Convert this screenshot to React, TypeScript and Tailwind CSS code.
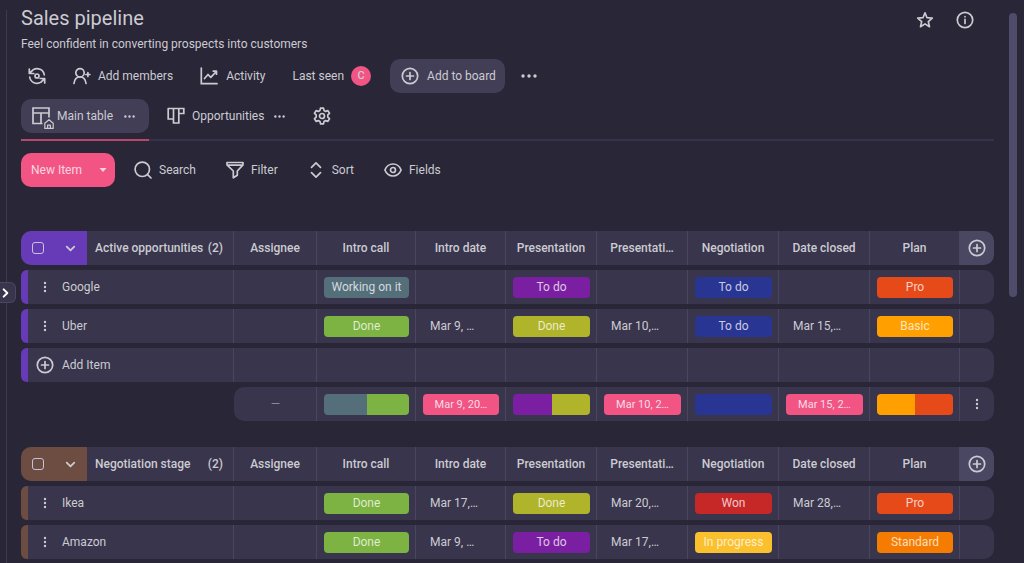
import type { ReactNode } from 'react';

type Cell = { kind: 'text' | 'tag' | 'date' | 'split' | 'dash'; label?: string; colors?: string[] } | null;

type Group = {
    id: string;
    title: string;
    color: string;
    rows: { name: string; cells: Cell[] }[];
    summary: Cell[] | null;
};

const columns = [
    { title: 'Assignee', width: 'w-[83px]' },
    { title: 'Intro call', width: 'w-[99px]' },
    { title: 'Intro date', width: 'w-[90px]' },
    { title: 'Presentation', width: 'w-[91px]' },
    { title: 'Presentati…', width: 'w-[91px]' },
    { title: 'Negotiation', width: 'w-[91px]' },
    { title: 'Date closed', width: 'w-[91px]' },
    { title: 'Plan', width: 'w-[90px]' }
];

const tag = (label: string, color: string): Cell => ({ kind: 'tag', label, colors: [color] });
const text = (label: string): Cell => ({ kind: 'text', label });
const date = (label: string): Cell => ({ kind: 'date', label });
const split = (...colors: string[]): Cell => ({ kind: 'split', colors });

const SLATE = 'bg-[#546e7a]';
const GREEN = 'bg-[#7cb342]';
const LIME = 'bg-[#afb42b]';
const PURPLE = 'bg-[#7b1fa2]';
const INDIGO = 'bg-[#283593]';
const RED = 'bg-[#c62828]';
const YELLOW = 'bg-[#fbc02d]';
const PRO = 'bg-[#e64a19]';
const BASIC = 'bg-[#ffa000]';
const STANDARD = 'bg-[#f57c00]';

const groups: Group[] = [
    {
        id: 'active',
        title: 'Active opportunities',
        color: 'bg-[#673ab7]',
        rows: [
            {
                name: 'Google',
                cells: [null, tag('Working on it', SLATE), null, tag('To do', PURPLE), null, tag('To do', INDIGO), null, tag('Pro', PRO)]
            },
            {
                name: 'Uber',
                cells: [null, tag('Done', GREEN), text('Mar 9, …'), tag('Done', LIME), text('Mar 10,…'), tag('To do', INDIGO), text('Mar 15,…'), tag('Basic', BASIC)]
            }
        ],
        summary: [
            { kind: 'dash' },
            split(SLATE, GREEN),
            date('Mar 9, 20…'),
            split(PURPLE, LIME),
            date('Mar 10, 2…'),
            split(INDIGO),
            date('Mar 15, 2…'),
            split(BASIC, PRO)
        ]
    },
    {
        id: 'negotiation',
        title: 'Negotiation stage',
        color: 'bg-[#6d4c41]',
        rows: [
            {
                name: 'Ikea',
                cells: [null, tag('Done', GREEN), text('Mar 17,…'), tag('Done', LIME), text('Mar 20,…'), tag('Won', RED), text('Mar 28,…'), tag('Pro', PRO)]
            },
            {
                name: 'Amazon',
                cells: [null, tag('Done', GREEN), text('Mar 9, …'), tag('To do', PURPLE), text('Mar 17,…'), tag('In progress', YELLOW), null, tag('Standard', STANDARD)]
            }
        ],
        summary: null
    }
];

const Icon = ({ children, className = 'size-[18px]' }: { children: ReactNode; className?: string }) => (
    <svg
        viewBox="0 0 18 18"
        className={`shrink-0 ${className}`}
        fill="none"
        stroke="currentColor"
        strokeWidth="1.7"
        strokeLinecap="round"
        strokeLinejoin="round"
        aria-hidden="true"
    >
        {children}
    </svg>
);

const PlusCircle = () => (
    <Icon>
        <circle cx="9" cy="9" r="7.7" />
        <path d="M9 5.5v7M5.5 9h7" />
    </Icon>
);

const Dots = ({ className }: { className: string }) => (
    <svg viewBox="0 0 16 4" className={`shrink-0 ${className}`} fill="currentColor" aria-hidden="true">
        <circle cx="2" cy="2" r="1.7" />
        <circle cx="8" cy="2" r="1.7" />
        <circle cx="14" cy="2" r="1.7" />
    </svg>
);

const Kebab = () => (
    <svg viewBox="0 0 4 12" className="h-3 w-1 shrink-0" fill="currentColor" aria-hidden="true">
        <circle cx="2" cy="2" r="1.2" />
        <circle cx="2" cy="6" r="1.2" />
        <circle cx="2" cy="10" r="1.2" />
    </svg>
);

const Chevron = () => (
    <Icon className="size-[13px]">
        <path d="M3.8 6.5 9 11.7l5.2-5.2" strokeWidth="2.5" />
    </Icon>
);

const CellContent = ({ cell }: { cell: Cell }) => {
    if (!cell) return null;
    if (cell.kind === 'dash') return <div className="text-center text-[#8b8998]">—</div>;
    if (cell.kind === 'text') return <div className="pl-[7px]">{cell.label}</div>;
    if (cell.kind === 'date') {
        return <div className="h-[21px] rounded-[4px] bg-[#f25584] text-center text-[11px] leading-[21px] text-[#f7dce5]">{cell.label}</div>;
    }
    if (cell.kind === 'tag') {
        return <div className={`h-[21px] rounded-[4px] text-center leading-[21px] text-white/75 ${cell.colors?.[0]}`}>{cell.label}</div>;
    }
    return (
        <div className="flex h-[21px] overflow-hidden rounded-[4px]">
            {cell.colors?.map((color) => (
                <div key={color} className={`flex-1 ${color}`}></div>
            ))}
        </div>
    );
};

const cellClass = 'border-r border-[#49465f] bg-[#38354d] pl-[7px] pr-[6px]';
const endClass = 'rounded-r-[10px] bg-[#38354d]';

const GroupTable = ({ group }: { group: Group }) => (
    <table className="w-full min-w-[930px] table-fixed border-separate border-spacing-x-0 border-spacing-y-[5px] text-[12px] leading-5">
        <colgroup>
            <col />
            {columns.map((column) => (
                <col key={column.title} className={column.width} />
            ))}
            <col className="w-[34px]" />
        </colgroup>
        <thead>
            <tr className="h-[34px]">
                <th className="rounded-l-[10px] border-r border-[#49465f] bg-[#38354d] p-0 font-medium">
                    <div className="flex h-[34px] items-center">
                        <div className={`flex h-full w-[66px] items-center justify-between rounded-l-[10px] pl-[11px] pr-[10px] ${group.color}`}>
                            <input
                                type="checkbox"
                                aria-label={`Select all in ${group.title}`}
                                className="size-3 appearance-none rounded-[3px] border border-[#c9c3d8]"
                            />
                            <button aria-label={`Collapse ${group.title}`}>
                                <Chevron />
                            </button>
                        </div>
                        <span className="flex-1 pl-2 text-left">{group.title}</span>
                        <span className="pr-[10px]">({group.rows.length})</span>
                    </div>
                </th>
                {columns.map((column) => (
                    <th key={column.title} className="whitespace-nowrap border-r border-[#49465f] bg-[#38354d] p-0 font-medium">
                        {column.title}
                    </th>
                ))}
                <th className="rounded-r-[10px] bg-[#4a4763] p-0">
                    <button aria-label="Add column" className="flex w-full justify-center">
                        <PlusCircle />
                    </button>
                </th>
            </tr>
        </thead>
        <tbody>
            {group.rows.map((row) => (
                <tr key={row.name} className="h-[34px]">
                    <td className="rounded-l-[6px] border-r border-[#49465f] bg-[#38354d] p-0">
                        <div className="flex h-[34px] items-center">
                            <div className={`h-full w-[7px] rounded-l-[6px] ${group.color}`}></div>
                            <button aria-label={`${row.name} options`} className="flex w-[34px] justify-center">
                                <Kebab />
                            </button>
                            <span>{row.name}</span>
                        </div>
                    </td>
                    {row.cells.map((cell, i) => (
                        <td key={columns[i].title} className={cellClass}>
                            <CellContent cell={cell} />
                        </td>
                    ))}
                    <td className={endClass}></td>
                </tr>
            ))}
            {group.summary && (
                <tr className="h-[34px]">
                    <td className="rounded-l-[6px] border-r border-[#49465f] bg-[#38354d] p-0">
                        <div className="flex h-[34px] items-center">
                            <div className={`h-full w-[7px] rounded-l-[6px] ${group.color}`}></div>
                            <button className="flex items-center gap-2 pl-2">
                                <PlusCircle />
                                Add Item
                            </button>
                        </div>
                    </td>
                    {columns.map((column) => (
                        <td key={column.title} className={cellClass}></td>
                    ))}
                    <td className={endClass}></td>
                </tr>
            )}
        </tbody>
        {group.summary && (
            <tfoot>
                <tr className="h-[34px]">
                    <td></td>
                    {group.summary.map((cell, i) => (
                        <td key={columns[i].title} className={`${cellClass} nth-2:rounded-l-[10px]`}>
                            <CellContent cell={cell} />
                        </td>
                    ))}
                    <td className={`${endClass} p-0`}>
                        <button aria-label="Summary options" className="flex w-full justify-center">
                            <Kebab />
                        </button>
                    </td>
                </tr>
            </tfoot>
        )}
    </table>
);

const Header = () => (
    <header className="pt-1">
        <div className="flex items-center justify-between">
            <h1 className="text-[20px] leading-7">Sales pipeline</h1>
            <div className="flex gap-[22px] pr-5 pt-1">
                <button aria-label="Add to favourites">
                    <Icon>
                        <path d="m9 1.8 2 4.9 5.300.4-4 3.500 1.200 5.100L9 12.900l-4.500 2.800 1.200-5.100-4-3.500 5.300-.4z" />
                    </Icon>
                </button>
                <button aria-label="Board info">
                    <Icon>
                        <circle cx="9" cy="9" r="7.7" />
                        <path d="M9 8.4v4M9 5.7v.1" />
                    </Icon>
                </button>
            </div>
        </div>
        <p className="mt-1 text-[12px] leading-4">Feel confident in converting prospects into customers</p>
    </header>
);

const BoardActions = () => (
    <div className="mt-[7px] flex h-[34px] items-center text-[12px]">
        <button aria-label="Refresh" className="ml-[7px]">
            <Icon>
                <path d="M5 2.9A7.3 7.3 0 0 1 16.3 8M13 15.1A7.3 7.3 0 0 1 1.7 10M1.3 2v4.5h4.5M16.7 16v-4.5h-4.5M1.7 6.2 5 2.9M16.3 11.8 13 15.1" />
                <circle cx="9" cy="9" r="2" />
            </Icon>
        </button>
        <button className="ml-[27px] flex items-center gap-[7px]">
            <Icon>
                <circle cx="7" cy="5.8" r="4.2" />
                <path d="M1 16.5c.4-4 2.6-6.5 6-6.5s5.6 2.5 6 6.5M14.9 5.5v4M12.9 7.5h4" />
            </Icon>
            Add members
        </button>
        <button className="ml-[27px] flex items-center gap-2">
            <Icon>
                <path d="M1.3 1v15.7H17" strokeLinejoin="miter" />
                <path d="m4.5 11.5 3.5-4 2.8 2.8 5.5-5.800M13.3 4.2h3.2v3" />
            </Icon>
            Activity
        </button>
        <button className="ml-[27px] flex items-center gap-[7px]">
            Last seen
            <span className="flex size-5 items-center justify-center rounded-full bg-[#f25584] text-[11px] font-medium">C</span>
        </button>
        <button className="ml-[19px] flex h-[34px] items-center gap-2 rounded-[10px] bg-[#413e56] pl-[11px] pr-[9px]">
            <PlusCircle />
            Add to board
        </button>
        <button aria-label="More actions" className="ml-4">
            <Dots className="h-1 w-4" />
        </button>
    </div>
);

const Views = () => (
    <nav className="mt-[6px] flex border-b-2 border-[#353249] text-[12px]">
        <div className="relative pb-[6px]">
            <div className="flex h-[34px] items-center rounded-[10px] bg-[#413e56] pl-[11px] pr-[14px]">
                <button className="flex items-center gap-2">
                    <svg viewBox="0 0 24 24" className="-mr-[7px] mt-[6px] size-6 shrink-0" fill="none" stroke="currentColor" aria-hidden="true">
                        <path d="M10.5 16.5H1V1h16v9.5M1 6h16M9 6v10.5" strokeWidth="1.7" />
                        <path d="m17 12.7-4.2 3.5v5.2h8.4v-5.200zM15.6 21.4v-3.2h2.8v3.2" strokeWidth="1.2" strokeLinejoin="round" />
                    </svg>
                    Main table
                </button>
                <button aria-label="Main table options" className="ml-[11px]">
                    <Dots className="h-[3px] w-[11px]" />
                </button>
            </div>
            <div className="absolute inset-x-0 -bottom-0.5 h-0.5 bg-[#b8476c]"></div>
        </div>
        <div className="ml-[18px] flex h-[34px] items-center">
            <button className="flex items-center gap-[7px]">
                <Icon>
                    <path d="M1.2 1.5h15.6v5h-5M1.2 1.5V12h5.3M6.5 1.5V16h5.3V1.5" strokeLinejoin="miter" />
                </Icon>
                Opportunities
            </button>
            <button aria-label="Opportunities options" className="ml-[10px]">
                <Dots className="h-[3px] w-[11px]" />
            </button>
            <button aria-label="View settings" className="ml-7">
                <Icon>
                    <circle cx="9" cy="9" r="2.5" />
                    <path d="M7.5 1.2h3l.5 2.2 1.7 1 2.2-.8 1.6 2.7-1.7 1.6v2.2l1.7 1.6-1.6 2.7-2.2-.8-1.7 1-.5 2.2h-3l-.5-2.2-1.7-1-2.2.8-1.6-2.7 1.7-1.6V7.9L1.5 6.3l1.6-2.7 2.2.8 1.7-1z" />
                </Icon>
            </button>
        </div>
    </nav>
);

const Toolbar = () => (
    <div className="mt-3 flex h-[34px] items-center text-[12px]">
        <div className="flex h-full rounded-[10px] bg-[#f25584] text-[#f9d5e0]">
            <button className="pl-[10px]">New Item</button>
            <button aria-label="More item types" className="pl-[17px] pr-2">
                <svg viewBox="0 0 8 4" className="h-1 w-2" fill="currentColor" aria-hidden="true">
                    <path d="M.5 0h7L4 4z" />
                </svg>
            </button>
        </div>
        <button className="ml-[19px] flex items-center gap-[7px]">
            <Icon>
                <circle cx="8.3" cy="8.3" r="7.2" />
                <path d="m13.6 13.6 3.4 3.4" />
            </Icon>
            Search
        </button>
        <button className="ml-[30px] flex items-center gap-[7px]">
            <Icon>
                <path d="M1 1.5h16v2.3L11.3 10v4.2l-4 2.6V10L1 3.800zM1.5 4.2h15" />
            </Icon>
            Filter
        </button>
        <button className="ml-[29px] flex items-center gap-[7px]">
            <Icon>
                <path d="M4.5 6.3 9 1.8l4.5 4.5M4.5 11.7 9 16.2l4.5-4.5" />
            </Icon>
            Sort
        </button>
        <button className="ml-[30px] flex items-center gap-[7px]">
            <Icon>
                <path d="M.9 9C2.5 5 5.5 3 9 3s6.5 2 8.1 6c-1.6 4-4.6 6-8.1 6S2.5 13 .9 9z" />
                <circle cx="9" cy="9" r="2.5" />
            </Icon>
            Fields
        </button>
    </div>
);

const App = () => (
    <div className="relative flex h-screen overflow-hidden bg-[#282637] font-['Roboto',sans-serif] text-[#cccbd1]">
        <div className="mt-[10px] w-[7px] shrink-0 border-r border-[#3d3a50]"></div>
        <button
            aria-label="Open sidebar"
            className="absolute left-0 top-[282px] flex h-[21px] w-4 items-center rounded-r-[6px] border border-l-0 border-[#4a4763] bg-[#38354d] text-white"
        >
            <Icon className="size-3">
                <path d="m5.5 3.5 5.5 5.5-5.5 5.5" strokeWidth="3" />
            </Icon>
        </button>

        <main className="min-w-0 flex-1 overflow-hidden pl-[14px]">
            <Header />
            <BoardActions />
            <Views />
            <Toolbar />
            <div className="mt-[39px] flex flex-col gap-4">
                {groups.map((group) => (
                    <GroupTable key={group.id} group={group} />
                ))}
            </div>
        </main>

        {/* Scrollbar */}
        <div className="flex w-[30px] shrink-0 justify-center pl-2 pt-[13px]">
            <div className="h-[284px] w-2 rounded-full bg-[#4f4c6b]"></div>
        </div>
    </div>
);

export default App;
